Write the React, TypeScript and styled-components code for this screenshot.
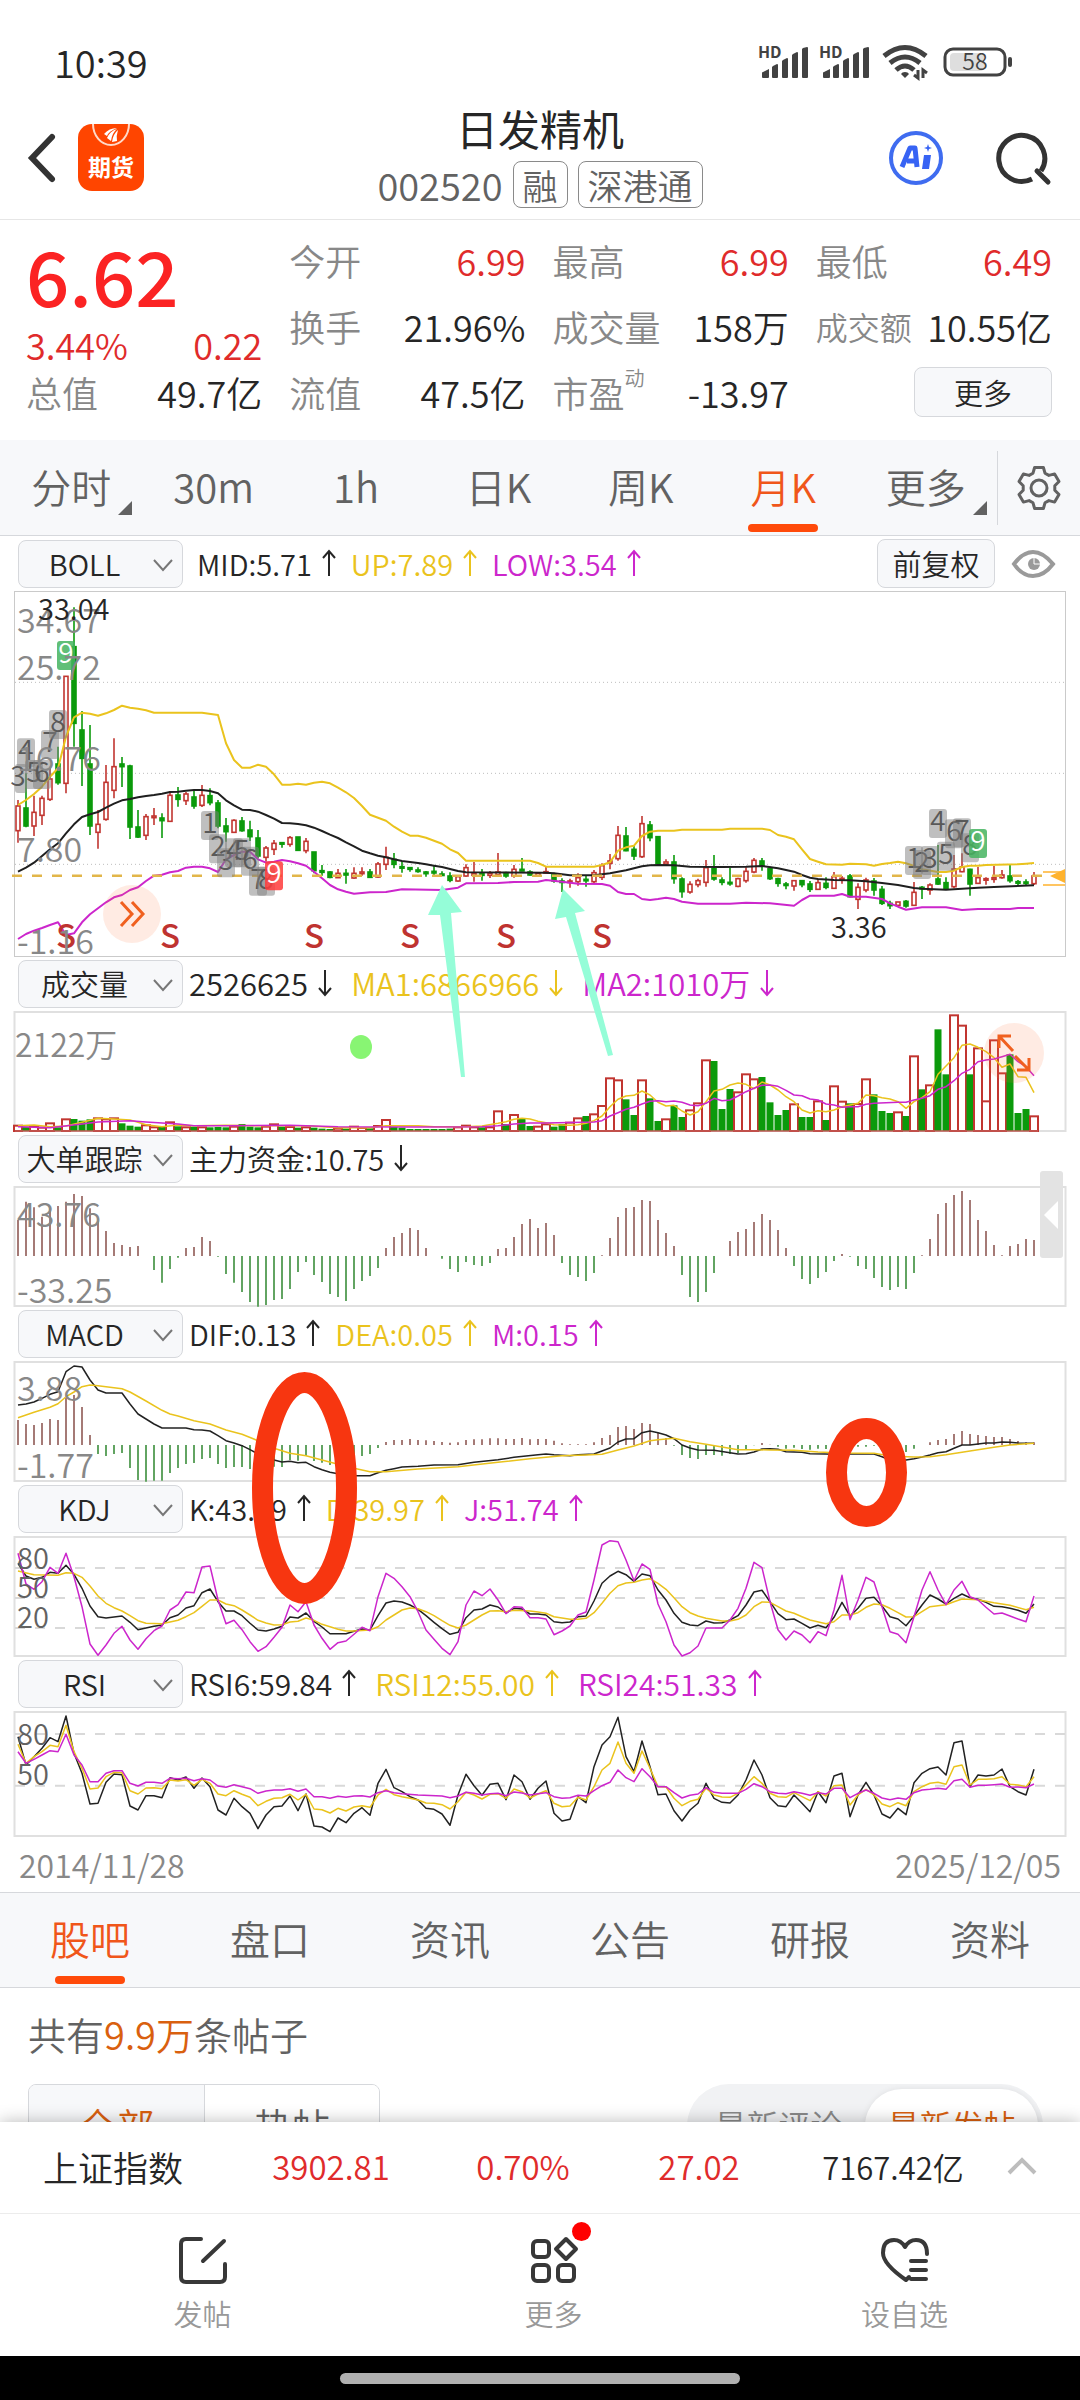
import React from "react";
import styled, { createGlobalStyle, css } from "styled-components";

/* ---------- tokens ---------- */

const ink = "#262626";
const sub = "#626262";
const mute = "#888888";
const rise = "#e02b2b";
const brand = "#ff4a0a";
const gold = "#eac31d";
const violet = "#cc26cc";
const panelBg = "#f7f8fa";
const line = "#d6d8dc";
const up = "#c13530";
const down = "#0b9a0b";

const GlobalStyle = createGlobalStyle`
  * { box-sizing: border-box; }
  body {
    margin: 0;
    background: #fff;
    color: ${ink};
    font-family: "Noto Sans CJK SC", "Noto Sans", sans-serif;
    font-weight: 350;
  }
  button, select {
    margin: 0;
    padding: 0;
    border: 0;
    background: none;
    color: inherit;
    font: inherit;
    cursor: pointer;
  }
  svg { display: block; overflow: visible; }
  svg text { font-family: "Noto Sans CJK SC", "Noto Sans", sans-serif; }
`;

/* ---------- shell ---------- */

const Screen = styled.div`
  display: flex;
  flex-direction: column;
  height: 100vh;
  overflow: hidden;
`;

const Scroll = styled.main`
  flex: 1;
  min-height: 0;
  overflow: hidden;
`;

const StatusBar = styled.div`
  display: flex;
  align-items: center;
  justify-content: space-between;
  height: 96px;
  padding: 28px 67px 0 54px;
  font-size: 38px;
  line-height: 48px;
`;

const StatusIcons = styled.div`
  display: flex;
  align-items: center;
  gap: 12px;
`;

const Header = styled.header`
  display: grid;
  grid-template-columns: 1fr auto 1fr;
  align-items: center;
  height: 124px;
  padding: 0 28px;
  border-bottom: 1px solid #e6e6e6;
`;

const HeaderSide = styled.div<{ $end?: boolean }>`
  display: flex;
  align-items: center;
  gap: ${(p) => (p.$end ? 54 : 23)}px;
  justify-content: ${(p) => (p.$end ? "flex-end" : "flex-start")};
`;

const Titles = styled.div`
  display: flex;
  flex-direction: column;
  align-items: center;
  gap: 3px;
  padding-bottom: 10px;
`;

const StockName = styled.h1`
  margin: 0;
  font-size: 42px;
  font-weight: 400;
  line-height: 60px;
`;

const StockCode = styled.div`
  display: flex;
  align-items: center;
  gap: 10px;
  color: ${sub};
  font-size: 38px;
  line-height: 45px;
`;

const Tag = styled.span`
  padding: 0 9px;
  border: 1px solid #8a8a8a;
  border-radius: 8px;
  font-size: 35px;
`;

/* ---------- quote ---------- */

const Quote = styled.section`
  display: grid;
  grid-template-columns: repeat(4, 1fr);
  column-gap: 27px;
  padding: 7px 28px 15px 26px;
  font-size: 36px;
`;

const QuoteCol = styled.div`
  display: flex;
  flex-direction: column;
`;

const Pair = styled.div<{ $h?: number }>`
  display: flex;
  align-items: center;
  justify-content: space-between;
  height: ${(p) => p.$h ?? 66}px;
  white-space: nowrap;
`;

const LastPrice = styled.strong`
  color: #fb2323;
  font-size: 76px;
  font-weight: 500;
  line-height: 94px;
`;

const Label = styled.span<{ $small?: boolean }>`
  color: ${mute};
  font-size: ${(p) => (p.$small ? 32 : 36)}px;
`;

const Sup = styled.sup`
  font-size: 20px;
  line-height: 20px;
  vertical-align: 22px;
`;

const Val = styled.span<{ $rise?: boolean }>`
  color: ${(p) => (p.$rise ? rise : ink)};
`;

const MoreButton = styled.button`
  width: 138px;
  height: 50px;
  margin-left: auto;
  border: 1px solid ${line};
  border-radius: 8px;
  background: ${panelBg};
  font-size: 29px;
  line-height: 44px;
`;

/* ---------- tabs ---------- */

const TabBar = styled.nav<{ $top?: boolean }>`
  display: flex;
  height: 96px;
  border-bottom: 1px solid ${line};
  ${(p) => p.$top && css`border-top: 1px solid ${line};`}
  background: ${panelBg};
`;

const Tab = styled.button<{ $on?: boolean }>`
  position: relative;
  flex: 1;
  padding-bottom: 4px;
  color: ${(p) => (p.$on ? "#f0561a" : sub)};
  font-size: 40px;
  line-height: 60px;
  ${(p) =>
    p.$on &&
    css`
      &::after {
        content: "";
        position: absolute;
        bottom: 3px;
        left: 50%;
        width: 70px;
        height: 8px;
        margin-left: -35px;
        border-radius: 4px;
        background: ${brand};
      }
    `}
`;

const Corner = styled.i`
  position: absolute;
  right: 10px;
  bottom: 20px;
  border-bottom: 14px solid ${sub};
  border-left: 14px solid transparent;
`;

const GearButton = styled.button`
  display: grid;
  place-items: center;
  width: 83px;
  height: 74px;
  margin-top: 11px;
  border-left: 1px solid ${line};
`;

/* ---------- charts ---------- */

const Charts = styled.section`
  position: relative;
`;

const ChartHead = styled.div<{ $first?: boolean }>`
  display: flex;
  align-items: center;
  height: ${(p) => (p.$first ? 55 : 54)}px;
  padding: 0 25px 0 18px;
  font-size: 30px;
`;

const Picker = styled.label`
  position: relative;
  flex: none;
  margin-right: 6px;
`;

const Select = styled.select`
  appearance: none;
  display: block;
  width: 165px;
  height: 48px;
  padding: 0 34px 2px 2px;
  border: 1px solid ${line};
  border-radius: 8px;
  background: ${panelBg};
  font-size: 29px;
  line-height: 44px;
  text-align: center;
  text-align-last: center;
`;

const PickerArrow = styled.svg`
  position: absolute;
  top: 18px;
  right: 10px;
  pointer-events: none;
`;

const LEGEND_SIZES = {
  compact: { font: 29, gap: 14 },
  regular: { font: 30, gap: 18 },
  wide: { font: 31, gap: 18 },
};

const Legends = styled.div<{ $size: keyof typeof LEGEND_SIZES; $indent?: boolean }>`
  display: flex;
  flex: 1;
  gap: ${(p) => LEGEND_SIZES[p.$size].gap}px;
  padding: 0 0 2px ${(p) => (p.$indent ? 8 : 0)}px;
  font-size: ${(p) => LEGEND_SIZES[p.$size].font}px;
  white-space: nowrap;
`;

const Legend = styled.span<{ $c: string }>`
  display: flex;
  align-items: center;
  gap: 10px;
  color: ${(p) => p.$c};
  line-height: 44px;
`;

const AdjustButton = styled.button`
  width: 118px;
  height: 49px;
  margin-right: 17px;
  padding-bottom: 2px;
  border: 1px solid ${line};
  border-radius: 8px;
  background: ${panelBg};
  font-size: 29px;
  line-height: 44px;
`;

const Panel = styled.div`
  position: relative;
`;

const ChartSvg = styled.svg`
  width: 100%;
  height: auto;
`;

const Round = styled.button<{ $size: number }>`
  position: absolute;
  display: grid;
  place-items: center;
  width: ${(p) => p.$size}px;
  height: ${(p) => p.$size}px;
  border-radius: 50%;
  background: rgba(255, 110, 60, 0.14);
`;

const ForwardButton = styled(Round)`
  left: 103px;
  bottom: 14px;
`;

const ExpandButton = styled(Round)`
  right: 36px;
  top: 12px;
`;

const DrawerHandle = styled.button`
  position: absolute;
  top: -15px;
  right: 17px;
  display: grid;
  place-items: center end;
  width: 23px;
  height: 87px;
  padding-right: 4px;
  border-radius: 3px;
  background: #e3e3e3;
`;

const Marks = styled.svg`
  position: absolute;
  inset: 0;
  width: 100%;
  height: 100%;
  pointer-events: none;
`;

const Dates = styled.div`
  display: flex;
  align-items: center;
  justify-content: space-between;
  height: 55px;
  padding: 0 19px 2px;
  color: ${mute};
  font-size: 32px;
`;

/* ---------- feed ---------- */

const Feed = styled.section`
  padding: 16px 28px 0;
`;

const PostCount = styled.p`
  margin: 0 0 20px;
  color: ${sub};
  font-size: 38px;
  line-height: 60px;
  b { color: #d9600f; font-weight: inherit; }
`;

const Filters = styled.div`
  display: flex;
  justify-content: space-between;
`;

const Segments = styled.div`
  display: flex;
  height: 84px;
  border: 1px solid ${line};
  border-radius: 8px;
  overflow: hidden;
`;

const Segment = styled.button<{ $on?: boolean }>`
  width: 175px;
  padding-bottom: 4px;
  color: ${(p) => (p.$on ? "#d9600f" : sub)};
  background: ${(p) => (p.$on ? panelBg : "#fff")};
  font-size: 38px;
  & + & { border-left: 1px solid ${line}; }
`;

const Pill = styled.div`
  display: flex;
  height: 84px;
  margin-right: 9px;
  padding: 5px;
  border-radius: 42px;
  background: #f1f2f4;
`;

const PillOption = styled.button<{ $on?: boolean }>`
  width: 173px;
  padding-bottom: 4px;
  border-radius: 37px;
  color: ${(p) => (p.$on ? "#d9600f" : mute)};
  background: ${(p) => (p.$on ? "#fff" : "none")};
  box-shadow: ${(p) => (p.$on ? "0 0 6px rgba(0, 0, 0, 0.08)" : "none")};
  font-size: 32px;
`;

/* ---------- bottom ---------- */

const IndexBar = styled.div`
  position: relative;
  display: grid;
  grid-template-columns: 192fr 192fr 192fr 160fr 228fr 30px;
  align-items: center;
  height: 92px;
  padding: 0 43px 3px;
  border-bottom: 1px solid #ececec;
  background: #fff;
  box-shadow: 0 0 16px rgba(0, 0, 0, 0.28);
  font-size: 33px;
  text-align: center;
  white-space: nowrap;
  z-index: 1;
`;

const IndexName = styled.span`
  font-size: 35px;
  text-align: left;
`;

const Turnover = styled.span`
  font-size: 31px;
`;

const BottomNav = styled.nav`
  position: relative;
  z-index: 2;
  display: flex;
  height: 142px;
  padding-left: 27px;
  background: #fff;
`;

const NavItem = styled.button`
  flex: 1;
  display: flex;
  flex-direction: column;
  align-items: center;
  padding-top: 22px;
  color: #999;
  font-size: 29px;
  line-height: 44px;
`;

const NavIcon = styled.span`
  position: relative;
  height: 55px;
  color: #383838;
`;

const Dot = styled.i`
  position: absolute;
  top: -14px;
  right: -13px;
  width: 19px;
  height: 19px;
  border-radius: 50%;
  background: #f00;
`;

const GestureBar = styled.div`
  position: relative;
  z-index: 2;
  display: flex;
  justify-content: center;
  height: 44px;
  padding-top: 17px;
  background: #000;
  &::after {
    content: "";
    width: 400px;
    height: 11px;
    border-radius: 6px;
    background: #b0b0b0;
  }
`;

/* ---------- chart helpers ---------- */

/* Bars sit 8px apart; sample levels are stored in thirds of a pixel. */
const X0 = 18;
const STEP = 8;
const bx = (i: number) => X0 + i * STEP;
const lv = (v: number) => v / 3;

const toPoints = (s: string) =>
  s
    .trim()
    .split(/\s+/)
    .map((p) => {
      const [i, v] = p.split(":").map(Number);
      return `${bx(i)},${lv(v).toFixed(1)}`;
    })
    .join(" ");

const Series = ({ d, c, w = 1.5 }: { d: string; c: string; w?: number }) => (
  <polyline points={toPoints(d)} fill="none" stroke={c} strokeWidth={w} strokeLinejoin="round" />
);

const dense = (s: string) => s.trim().split(/\s+/).map(Number);

const Frame = ({ y, h, c = "#e0e0e0", w = 2 }: { y: number; h: number; c?: string; w?: number }) => (
  <rect x="14.5" y={y + 1} width="1051" height={h - 2} fill="none" stroke={c} strokeWidth={w} />
);

const Grid = ({ v, dash, c = "#d9d9d9", w = 2 }: { v: number; dash: string; c?: string; w?: number }) => (
  <line x1="15" x2="1065" y1={lv(v)} y2={lv(v)} stroke={c} strokeWidth={w} strokeDasharray={dash} />
);

const Axis = ({ v, children, c = mute, s = 34, x = 17 }: { v: number; children: string; c?: string; s?: number; x?: number }) => (
  <text x={x} y={lv(v)} fontSize={s} fontWeight="350" fill={c}>
    {children}
  </text>
);

const Histogram = ({ data, zero }: { data: number[]; zero: number }) => (
  <g strokeWidth="2">
    {data.map((v, i) =>
      v === zero ? null : (
        <line key={i} x1={bx(i)} x2={bx(i)} y1={lv(zero)} y2={lv(v)} stroke={v < zero ? "#a57a76" : "#62a462"} />
      )
    )}
  </g>
);

/* ---------- data ---------- */

/* direction, open/close span, high, low */
const CANDLES = `r678,752,660,788 g684,738,580,742 r697,738,647,768 r655,706,647,735 r597,658,560,663 g552,608,500,614 r289,610,289,640 g200,430,82,500
g450,535,393,618 g552,738,435,765 r733,757,690,806 r607,718,555,722 r560,631,475,655 g552,560,531,621 g558,741,554,777 g741,771,690,774
r710,766,702,780 r708,713,684,735 g714,722,700,774 r646,724,633,726 g645,658,621,680 r642,662,636,675 g651,678,630,686 r646,676,615,681
g647,668,625,676 g669,738,660,745 g738,755,714,785 r721,757,718,758 g723,752,711,755 g750,770,722,783 g774,828,750,835 r804,832,798,845
r790,808,780,825 g788,792,786,803 r773,793,768,800 g771,811,771,811 r784,812,774,820 g816,872,816,880 g872,877,855,887 g876,892,874,895
r880,893,867,894 g880,885,867,911 r880,894,862,896 r876,881,862,887 g876,892,867,894 r852,891,846,893 r832,853,800,870 g838,853,819,865
g860,863,843,878 g863,868,861,875 g870,873,862,878 g876,881,873,890 g874,879,858,886 g882,885,874,887 g888,901,877,907 r890,903,885,905
r863,888,853,890 r880,886,846,905 g880,886,867,902 r880,886,873,894 r876,884,819,888 g878,888,875,893 r868,888,855,893 g868,873,834,874
g876,885,871,887 r880,887,876,889 r875,878,860,882 g882,903,878,908 g903,906,895,936 r903,906,896,923 r893,905,880,917 g898,902,885,920
r878,905,870,911 r857,892,850,900 r843,850,822,868 r766,836,738,842 g768,812,741,814 g808,828,798,840 r731,830,708,834 g735,773,723,784
g770,850,768,853 r846,852,838,856 g846,896,825,911 g897,935,892,953 r913,936,904,941 r902,914,896,922 r863,907,840,920 g866,897,825,902
g900,907,892,916 g907,911,864,917 r896,919,893,922 r874,902,862,908 r841,876,834,880 g843,858,834,872 g866,896,860,900 g896,910,893,920
g912,915,906,928 r902,918,900,932 g902,914,900,922 g912,928,903,936 r908,928,898,930 g910,922,892,928 r890,925,876,927 r895,900,888,911
g888,950,882,952 r922,958,910,987 r900,930,893,937 g903,930,894,947 g928,970,918,975 g970,977,962,987 r966,976,966,977 g964,978,960,983
r937,976,906,978 g922,925,918,957 r915,930,910,944 g897,912,795,915 g908,926,892,928 r867,920,825,925 r861,875,820,877 g868,912,866,947
r893,910,861,912 r896,900,892,914 r893,898,858,908 r885,893,870,896 g888,902,855,908 g905,908,900,917 g906,910,898,917 r888,911,876,915`
  .split(/\s+/)
  .map((c) => ({ rise: c[0] === "r", v: c.slice(1).split(",").map(Number) }));

const BOLL_UP =
  "0:675 1:660 2:642 3:620 4:590 5:565 6:470 7:412 8:398 9:401 10:407 11:400 12:390 13:377 14:383 15:386 16:391 17:398 23:398 25:405 26:490 27:540 28:563 29:563 30:554 31:560 32:583 33:614 34:614 35:611 36:614 37:608 38:605 39:610 40:623 41:637 42:654 43:678 44:704 45:713 46:722 47:740 48:755 49:767 50:767 51:773 52:782 53:791 54:808 55:819 56:842 64:842 65:849 66:860 72:860 73:855 74:847 75:812 76:802 77:797 78:768 79:755 80:752 82:752 83:749 88:749 89:746 93:746 94:750 95:765 96:770 97:778 98:808 99:837 100:845 101:853 103:854 104:851 106:853 107:857 108:852 109:849 110:845 111:850 112:858 113:868 115:876 116:876 117:872 118:861 119:857 120:857 121:855 125:853 126:851 127:849";
const BOLL_MID =
  "0:875 1:863 2:848 3:828 4:808 5:790 6:760 7:733 8:711 9:703 10:696 11:683 12:671 13:661 14:657 15:652 16:648 17:645 18:641 19:636 20:635 21:632 22:630 23:630 24:633 25:640 26:661 27:676 28:689 29:690 30:695 31:705 32:716 33:729 34:730 35:732 36:736 37:743 38:753 39:764 40:774 41:787 42:799 43:812 44:820 45:827 46:832 47:838 48:843 49:846 50:849 51:853 52:857 53:861 54:867 55:873 56:877 66:878 67:880 68:883 69:886 72:886 73:883 74:880 75:875 76:871 77:865 78:859 79:856 80:855 82:856 83:858 84:860 88:861 91:860 93:858 95:865 97:875 98:885 99:893 100:897 102:900 104:901 106:904 108:909 110:915 112:924 113:926 116:929 118:926 120:923 122:921 127:916";
const BOLL_LOW =
  "0:1077 1:1062 2:1052 3:1044 4:1035 5:1027 6:1065 7:1060 8:1027 9:1003 10:985 11:967 12:952 13:945 14:930 15:922 16:903 17:887 18:884 19:877 20:873 21:863 22:860 23:860 24:865 25:876 26:838 27:825 28:815 29:815 30:838 31:848 32:845 33:840 34:844 35:850 36:857 37:875 38:895 39:915 40:928 41:935 42:941 44:937 46:936 48:928 53:930 55:923 56:910 60:909 62:906 65:905 66:900 68:905 70:911 73:912 74:917 75:936 76:942 77:942 78:957 79:960 80:957 81:953 82:957 83:965 85:971 89:971 91:968 94:970 97:977 98:960 99:947 102:947 103:942 104:950 106:950 108:957 109:970 110:980 111:989 113:982 116:982 118:990 120:987 124:987 125:984 127:984";

/* column, top, digit, tone */
const BADGES: [number, number, string, string?][] = [
  [0, 552, "3"], [1, 475, "4"], [2, 540, "5"], [3, 540, "6"], [4, 450, "7"], [5, 390, "8"], [6, 183, "9", "#44b45f"],
  [24, 693, "1"], [25, 763, "2"], [26, 805, "3"], [27, 775, "4"], [28, 775, "5"], [29, 800, "6"], [30, 860, "7"], [31, 860, "8"], [32, 844, "9", "#ff3b3b"],
  [112, 798, "1"], [113, 810, "2"], [114, 798, "3"], [115, 687, "4"], [116, 785, "5"], [117, 718, "6"], [118, 715, "7"], [119, 760, "8"], [120, 747, "9", "#44b45f"],
];

const VOLUME = dense(`497 500 498 503 490 502 478 477 482 478 475 478 475 490 497 500 496 502 501 487 499 502 500 502 502 501 502 500 492 500 502 500
493 500 501 503 502 503 506 507 506 506 500 504 505 498 480 501 503 507 507 507 507 507 506 502 497 502 502 502 454 492 465 476
498 500 493 500 492 488 475 468 463 438 355 361 418 465 361 415 483 478 436 471 451 430 301 303 447 387 397 343 358 351 427 465
450 433 471 471 424 480 379 425 430 432 358 403 453 459 457 468 289 388 376 208 343 166 197 343 265 424 241 340 283 459 447 469`);
const VOL_MA1 =
  "0:497 2:495 4:500 6:498 8:487 10:475 12:477 14:480 15:487 16:494 18:500 20:495 22:497 26:496 30:497 36:497 40:503 44:503 46:497 50:497 52:500 56:500 58:498 60:490 61:485 62:478 63:475 64:477 65:484 66:488 67:494 69:496 70:494 71:490 72:482 73:468 74:440 75:418 76:408 77:406 78:393 79:405 80:427 81:438 82:436 83:453 84:465 85:455 86:425 87:393 88:388 89:375 90:369 91:373 92:386 93:366 94:375 95:390 96:410 97:425 98:450 99:459 100:452 101:455 102:450 103:440 104:435 105:430 106:405 107:407 108:413 109:417 110:425 111:445 112:425 113:413 114:395 115:343 116:318 117:293 118:256 119:252 120:262 121:275 122:293 123:322 124:312 125:350 126:352 127:398";
const VOL_MA2 =
  "0:500 4:503 8:492 10:486 14:482 16:486 20:492 22:497 26:497 34:496 40:500 50:501 58:500 60:497 62:492 64:489 66:489 72:486 73:482 74:468 75:458 76:448 77:442 78:432 79:424 80:422 81:425 82:423 83:427 84:435 85:437 86:430 87:415 88:422 89:420 90:408 91:395 92:385 93:376 94:375 95:379 96:391 97:405 98:407 99:417 100:420 101:432 102:435 103:442 104:440 105:440 106:433 107:430 110:427 111:427 112:420 113:415 114:407 115:388 116:380 117:362 118:340 119:328 120:305 121:300 122:297 123:290 124:283 125:305 126:320 127:347";

const BIG_ORDERS = dense(`780 725 742 770 745 738 725 702 708 745 783 813 849 855 861 858 888 930 968 927 893 864 861 831 843 890 942 968 996 1026 1040 1035
1020 1017 987 936 906 945 966 1002 1011 1023 987 963 948 924 864 831 819 804 810 864 888 896 927 936 906 915 918 909 867 864 831 792
777 804 789 825 909 945 951 963 939 886 834 771 744 741 720 723 780 819 858 945 1011 1026 996 939 888 843 816 807 786 762 780 810
864 918 957 972 954 936 903 882 890 918 927 954 981 990 981 987 939 886 837 762 729 705 693 720 780 813 855 886 858 852 837 840`);

const MACD_BARS = dense(`360 372 375 369 357 360 287 285 321 405 462 468 462 459 504 540 545 542 542 519 504 492 489 477 474 492 504 501 501 507 510 505
500 501 480 482 468 483 488 495 490 485 480 468 462 444 426 420 420 417 420 421 423 426 428 427 420 418 418 415 415 417 417 414
418 417 417 422 430 433 433 433 427 414 405 381 378 387 369 372 399 414 437 465 474 477 465 465 467 462 459 447 436 429 434 440
446 443 447 449 446 447 444 442 438 440 440 437 440 442 450 456 446 435 427 420 417 402 393 402 405 408 411 411 417 423 427 427`);
const DIF =
  "0:315 1:312 2:306 3:295 4:283 5:275 6:215 7:198 8:201 9:240 10:270 11:279 13:279 14:312 15:342 16:357 17:372 18:384 21:384 22:389 23:390 24:393 25:407 26:422 27:429 28:437 29:449 30:462 31:475 32:480 33:486 34:484 35:488 36:487 37:500 38:509 39:517 40:521 42:527 44:527 45:518 46:511 47:506 48:501 50:499 52:495 55:494 57:487 60:479 62:472 65:464 66:462 67:464 69:467 70:464 72:462 73:453 74:444 75:426 76:417 77:416 78:398 79:393 80:398 81:405 82:416 83:435 84:444 85:450 87:451 89:458 90:462 91:461 92:456 93:447 94:446 95:448 96:455 98:457 99:461 101:462 103:464 104:462 107:462 108:470 109:480 111:480 112:476 113:471 114:465 115:458 116:455 117:445 118:435 119:435 120:432 121:429 122:429 123:426 124:427 125:429 127:430";
const DEA =
  "0:353 2:337 4:322 5:311 6:290 7:276 8:260 9:255 10:257 12:263 13:266 14:276 16:303 18:331 19:342 20:348 22:362 24:372 26:390 28:403 30:422 32:445 34:460 36:467 38:480 40:493 42:505 44:515 46:515 50:507 55:500 60:487 64:476 68:467 71:465 73:463 75:450 77:438 79:422 80:419 82:415 84:425 86:433 88:441 90:449 92:449 94:450 97:451 100:456 103:459 107:460 109:468 112:471 114:470 116:464 118:457 120:449 122:442 124:435 127:430";

const KDJ_K =
  "0:790 1:828 2:838 3:832 4:817 5:820 6:796 7:823 8:865 9:918 10:950 11:954 12:951 13:948 14:967 15:989 16:984 17:979 18:975 19:953 20:945 21:924 22:917 23:878 24:867 25:905 26:933 27:933 28:947 29:970 30:990 31:993 32:987 33:979 34:951 35:954 36:939 37:964 38:981 39:1001 41:1001 42:994 43:987 44:990 45:947 46:909 47:903 48:906 49:915 50:928 51:947 52:967 53:986 54:1003 55:997 56:953 57:930 58:927 59:915 60:921 61:939 62:925 63:927 64:942 65:942 66:945 67:965 68:968 69:966 70:950 71:948 72:903 73:850 74:828 75:814 76:824 77:844 78:822 79:827 80:870 81:900 82:940 83:967 84:975 85:977 86:963 87:969 88:968 89:960 90:947 91:915 92:876 93:871 94:905 95:941 96:959 97:957 98:970 99:984 100:976 101:983 102:952 103:907 104:948 105:925 106:895 107:892 108:918 109:950 110:957 111:977 112:948 113:915 114:885 115:897 116:912 117:895 118:882 119:893 120:898 121:907 122:919 123:920 124:925 125:931 126:940 127:912";
const KDJ_D =
  "0:813 2:824 5:826 6:818 7:820 8:832 9:858 10:888 11:910 12:923 13:933 14:947 15:962 16:970 18:971 20:961 21:950 22:938 23:919 24:900 25:900 26:912 27:917 28:930 29:945 30:961 31:969 32:975 33:974 34:966 35:964 36:954 37:961 38:973 39:980 40:988 41:993 42:993 44:990 45:980 46:960 47:945 48:930 49:924 50:926 51:935 52:947 53:962 54:976 55:984 56:975 57:960 58:945 59:933 60:932 61:935 62:931 64:933 65:936 66:940 67:950 69:958 70:958 71:955 72:938 73:910 74:880 75:857 76:849 77:847 78:840 79:836 80:850 81:868 82:893 83:920 84:938 85:948 86:955 88:963 89:963 90:958 91:945 92:920 93:906 94:907 95:920 96:933 97:940 98:950 99:960 101:971 102:965 103:945 104:945 105:938 106:922 107:912 108:914 109:925 110:938 111:951 112:950 113:935 114:920 116:914 117:905 118:897 120:899 122:908 124:916 126:929 127:922";
const KDJ_J =
  "0:760 1:852 2:868 3:845 4:802 5:820 6:760 7:830 8:920 9:1032 10:1066 11:1035 12:1000 13:979 14:1020 15:1048 16:1016 17:992 18:978 19:930 20:914 21:876 22:878 23:801 24:798 25:900 26:971 27:961 28:989 29:1025 30:1054 31:1040 32:1012 33:982 34:915 35:935 36:905 37:975 38:1015 39:1048 40:1028 41:1023 42:1003 43:982 44:992 45:890 46:820 47:835 48:860 49:890 50:935 51:990 52:1018 53:1045 54:1064 55:1025 56:915 57:873 58:887 59:867 60:900 61:941 62:920 63:922 64:953 65:953 66:957 67:1004 68:993 69:978 70:945 71:936 72:840 73:735 74:722 75:725 76:780 77:842 78:792 79:808 80:912 81:965 82:1035 83:1068 84:1058 85:1038 86:984 88:984 89:960 90:925 91:865 92:787 93:803 94:905 95:989 96:1020 97:993 98:1005 99:1028 100:995 101:1007 102:930 103:826 104:959 105:900 106:832 107:846 108:920 109:995 110:1003 111:1028 112:950 113:870 114:815 115:870 116:914 117:870 118:844 119:890 120:900 121:922 122:942 123:939 124:948 125:957 126:965 127:888";

const RSI6 =
  "0:290 1:375 2:350 3:325 4:293 5:305 6:228 7:340 8:400 9:492 10:490 11:427 12:402 13:404 14:498 15:510 16:467 17:467 18:473 19:413 20:420 21:411 22:445 23:414 24:440 25:510 26:525 27:475 28:500 29:520 30:566 31:525 32:500 33:498 34:468 35:512 36:462 37:558 38:561 39:575 40:534 41:548 42:520 43:503 44:526 45:430 46:388 47:443 48:455 49:470 50:480 51:505 52:508 53:522 54:556 55:465 56:403 57:437 58:466 59:433 60:430 61:479 62:405 63:425 64:478 65:445 66:423 67:520 68:543 69:538 70:470 71:488 72:380 73:315 74:290 75:232 76:350 77:395 78:303 79:380 80:464 81:462 82:512 83:543 84:510 85:490 86:430 87:475 88:487 89:489 90:465 91:420 92:360 93:405 94:473 95:497 96:500 97:465 98:490 99:515 100:455 101:488 102:408 103:400 104:530 105:465 106:427 107:465 108:522 109:534 110:505 111:524 112:428 113:400 114:386 115:381 116:405 117:308 118:303 119:440 120:405 121:408 122:405 123:387 124:440 125:455 126:465 127:388";
const RSI12 =
  "0:313 1:370 2:350 3:335 4:316 5:320 6:256 7:335 8:385 9:447 10:444 11:410 12:397 13:398 14:452 15:462 16:444 17:443 18:446 19:420 20:423 21:419 22:436 23:418 24:430 25:462 26:467 27:452 28:463 29:472 30:497 31:484 32:475 33:473 34:463 35:480 36:463 37:507 38:509 39:519 40:505 41:513 42:501 43:497 44:502 45:465 46:448 47:464 48:470 49:475 50:480 51:489 52:490 53:494 54:507 55:485 56:457 57:465 58:477 59:463 60:461 61:475 62:447 63:455 64:474 65:462 66:452 67:490 68:500 69:498 70:472 71:480 72:440 73:390 74:370 75:306 76:370 77:400 78:333 79:385 80:440 81:441 82:475 83:497 84:484 85:478 86:445 87:465 88:471 89:472 90:460 91:435 92:410 93:430 94:460 95:470 96:472 97:458 98:470 99:482 100:455 101:468 102:437 103:435 104:495 105:465 106:448 107:465 108:492 109:500 110:488 111:497 112:455 113:440 114:430 115:427 116:433 117:380 118:375 119:435 120:418 121:418 122:416 123:410 124:433 125:435 126:440 127:410";
const RSI24 =
  "0:335 1:370 2:358 3:345 4:332 5:335 6:283 7:345 8:375 9:425 10:425 11:400 12:392 13:392 14:430 15:438 16:427 17:427 18:430 19:415 20:416 21:415 22:422 23:416 24:420 25:438 26:442 27:434 28:440 29:446 30:460 31:453 32:450 33:450 34:446 35:454 36:447 37:470 38:470 39:475 40:469 41:472 42:468 43:467 44:471 45:458 46:452 47:458 48:461 50:465 53:468 54:473 55:468 56:457 57:460 58:465 59:461 60:460 61:467 62:456 63:459 64:465 65:461 66:458 67:470 68:475 69:473 70:466 71:468 72:452 73:437 74:427 75:390 76:413 77:425 78:386 79:410 80:440 81:440 82:458 83:474 84:466 85:462 86:443 87:457 88:460 90:460 91:448 92:431 93:440 94:455 95:460 96:461 97:455 98:460 99:466 100:458 101:462 102:445 103:445 104:473 105:460 106:450 107:460 108:474 109:479 110:474 111:478 112:458 113:450 114:448 115:445 116:448 117:422 118:418 119:442 120:436 121:436 122:434 123:432 124:442 125:441 126:443 127:432";

/* ---------- icons ---------- */

const Signal = () => (
  <svg width="49" height="34" viewBox="0 0 49 34" fill="#424242">
    <text x="-2" y="13" fontSize="16" fontWeight="700">HD</text>
    <path d="M2 32v-4q0-1 1-1l6-3v8q0 1-1 1H3q-1 0-1-1zM13 21l4-2q1 0 1 1v12q0 1-1 1h-4q-1 0-1-1V22zM23 15l4-2q1 0 1 1v18q0 1-1 1h-4q-1 0-1-1V16zM33 9l4-2q1 0 1 1v24q0 1-1 1h-4q-1 0-1-1V10zM43 3l4-1q1 0 1 1v29q0 1-1 1h-4q-1 0-1-1V4z" />
  </svg>
);

const Wifi = () => (
  <svg width="46" height="36" viewBox="0 0 46 36" fill="none" stroke="#424242" strokeWidth="5">
    <path d="M2 12q21-17 42 0M8 19q15-12 30 0M14 26q9-8 18 0" />
    <path d="M23 28q-3 0-4 2l4 4 4-4q-1-2-4-2z" fill="#424242" stroke="none" />
    <path d="M36 26v8l-4-3M41 34v-8l4 3" strokeWidth="3" />
  </svg>
);

const Battery = () => (
  <svg width="73" height="30" viewBox="-3 0 73 30">
    <rect x="7" y="6" width="34" height="18" rx="4" fill="#dedede" />
    <rect x="2" y="2" width="60" height="26" rx="8" fill="none" stroke="#424242" strokeWidth="3" />
    <rect x="65" y="10" width="4" height="10" rx="2" fill="#424242" />
    <text x="32" y="23" fontSize="23" textAnchor="middle" fill="#424242">58</text>
  </svg>
);

const AppIcon = () => (
  <svg width="66" height="67" viewBox="0 0 66 67">
    <rect width="66" height="67" rx="14" fill="#ff4500" />
    <path d="M15 0a18 21 0 0 0 36 0" fill="none" stroke="#ffd9c8" strokeWidth="2" />
    <path d="M26 10q5-6 13-6-8 3-10 8zM29 14q3-7 10-9-5 4-6 12zM34 18q1-8 6-12-2 6-1 11z" fill="#fff" />
    <text x="33" y="52" fontSize="23" fontWeight="700" fill="#fff" textAnchor="middle">期货</text>
  </svg>
);

const AiIcon = () => (
  <svg width="56" height="56" viewBox="0 0 56 56">
    <circle cx="28" cy="28" r="25" fill="none" stroke="#3f6cf0" strokeWidth="4" />
    <path d="M14 37 L22 18 H27 L29 37 M19 31 H28" fill="none" stroke="#3763f4" strokeWidth="5" strokeLinejoin="round" />
    <path d="M36 25h7l-2 14h-7zM40 14l1 3 3 1-3 1-1 3-1-3-3-1 3-1z" fill="#3763f4" />
  </svg>
);

const SearchIcon = () => (
  <svg width="54" height="56" viewBox="0 0 54 56" fill="none" stroke="#333" strokeWidth="5" strokeLinecap="round">
    <path d="M34 49A23 23 0 1 1 43 41" strokeLinecap="butt" />
    <path d="M39 41 50 52" />
  </svg>
);

const gearPath = Array.from({ length: 6 }, (_, k) => {
  const pt = (deg: number, r: number) => {
    const a = ((k * 60 - 90 + deg) * Math.PI) / 180;
    return `${(24 + r * Math.cos(a)).toFixed(1)} ${(24 + r * Math.sin(a)).toFixed(1)}`;
  };
  return `${k ? "L" : "M"}${pt(-22, 16)}L${pt(-12, 21)}L${pt(12, 21)}L${pt(22, 16)}`;
}).join("") + "Z";

const Gear = () => (
  <svg width="48" height="48" viewBox="0 0 48 48" fill="none" stroke={sub} strokeWidth="3" strokeLinejoin="round">
    <path d={gearPath} />
    <circle cx="24" cy="24" r="8" />
  </svg>
);

const Eye = () => (
  <svg width="43" height="28" viewBox="0 0 43 28" fill="none" stroke="#9a9a9a" strokeWidth="4">
    <path d="M2 14Q11 2 21 2t20 12Q32 26 21 26T2 14z" />
    <circle cx="22" cy="14" r="6" fill="#9a9a9a" stroke="none" />
    <path d="M22 7v7h6" stroke="#fff" strokeWidth="1" />
  </svg>
);

const Arrow = ({ downward }: { downward?: boolean }) => (
  <svg width="15" height="28" viewBox="0 0 15 28" fill="none" stroke="currentColor" strokeWidth="2">
    <path d={downward ? "M7 1v25M1 19l6 7 6-7" : "M7 27V2M1 9l6-7 6 7"} />
  </svg>
);

/* ---------- indicator header ---------- */

type LegendItem = { text: string; c: string; down?: boolean };

type HeadProps = {
  options: string[];
  items: LegendItem[];
  size?: keyof typeof LEGEND_SIZES;
  first?: boolean;
  children?: React.ReactNode;
};

const IndicatorHead = ({ options, items, size = "compact", first, children }: HeadProps) => (
  <ChartHead $first={first}>
    <Picker>
      <Select aria-label="指标" defaultValue={options[0]}>
        {options.map((o) => (
          <option key={o}>{o}</option>
        ))}
      </Select>
      <PickerArrow width="20" height="14" viewBox="0 0 20 14" fill="none" stroke="#777" strokeWidth="2">
        <path d="M1 2l9 10 9-10" />
      </PickerArrow>
    </Picker>
    <Legends $size={size} $indent={first}>
      {items.map((l) => (
        <Legend key={l.text} $c={l.c}>
          {l.text}
          <Arrow downward={l.down} />
        </Legend>
      ))}
    </Legends>
    {children}
  </ChartHead>
);

/* ---------- panels ---------- */

const PriceChart = () => (
  <ChartSvg viewBox="0 11 1080 366">
    <rect x="14.5" y="11.5" width="1051" height="365" fill="none" stroke="#cacaca" />
    {[307, 580, 853].map((v) => (
      <Grid key={v} v={v} dash="1 3" c="#bdbdbd" w={1} />
    ))}
    {CANDLES.map(({ rise: r, v: [a, b, hi, lo] }, i) => {
      const x = bx(i);
      const h = Math.max(lv(b - a), 1.5);
      return (
        <g key={i} stroke={r ? up : down} strokeWidth="1.6">
          <line x1={x} x2={x} y1={lv(hi)} y2={lv(a)} />
          <line x1={x} x2={x} y1={lv(b)} y2={lv(lo)} />
          <rect x={x - 2} y={lv(a)} width="4" height={h} fill={r ? "#fff" : down} />
        </g>
      );
    })}
    <Series d={BOLL_UP} c={gold} w={2} />
    <Series d={BOLL_MID} c="#1f1f1f" w={2} />
    <Series d={BOLL_LOW} c={violet} w={2} />
    <line x1="12" x2="1050" y1="295.7" y2="295.7" stroke="#e2b64a" strokeWidth="2.4" strokeDasharray="10 10" />
    <path d="M1065 289v14l-15-7z" fill="#ffb32e" />
    <path d="M1043 292h22M1043 305h22" stroke="#ffb32e" strokeWidth="1.6" />
    {BADGES.map(([i, top, n, tone]) => (
      <g key={`${i}-${n}`}>
        <rect x={Math.max(bx(i) - 9, 15)} y={lv(top)} width={i === 0 ? 12 : 18} height="29" rx="3" fill={tone ?? "#808080"} opacity={tone ? 0.85 : 0.5} />
        <text x={bx(i)} y={lv(top) + 22} fontSize="28" fontWeight="350" textAnchor="middle" fill={tone ? "#fff" : "#595959"}>
          {n}
        </text>
      </g>
    ))}
    {[6, 19, 37, 49, 61, 73].map((i) => (
      <text key={i} x={bx(i)} y={lv(1105)} fontSize="33" fontWeight="500" textAnchor="middle" fill="#bf3330">
        S
      </text>
    ))}
    <Axis v={158}>34.67</Axis>
    <Axis v={299}>25.72</Axis>
    <Axis v={572}>16.76</Axis>
    <Axis v={845}>7.80</Axis>
    <Axis v={1122}>-1.16</Axis>
    <Axis v={120} x={38} s={29} c={ink}>33.04</Axis>
    <Axis v={1073} x={831} s={29} c={ink}>3.36</Axis>
  </ChartSvg>
);

const VolumeChart = () => (
  <ChartSvg viewBox="0 51 1080 121">
    <Frame y={51} h={121} />
    {VOLUME.map((v, i) => {
      const r = CANDLES[i].rise;
      return r ? (
        <rect key={i} x={bx(i) - 4} y={lv(v)} width="8" height={171 - lv(v)} fill="#fff" stroke={up} strokeWidth="2" />
      ) : (
        <rect key={i} x={bx(i) - 3.5} y={lv(v)} width="7" height={171 - lv(v)} fill={down} />
      );
    })}
    <line x1="15" x2="1038" y1="171" y2="171" stroke="#c05a55" strokeWidth="1.6" />
    <Series d={VOL_MA1} c={gold} />
    <Series d={VOL_MA2} c={violet} />
    <Axis v={290} x={15} s={32}>2122万</Axis>
  </ChartSvg>
);

const BigOrderChart = () => (
  <ChartSvg viewBox="0 226 1080 121">
    <Frame y={226} h={121} />
    <Histogram data={BIG_ORDERS} zero={888} />
    <Axis v={800}>43.76</Axis>
    <Axis v={1029}>-33.25</Axis>
  </ChartSvg>
);

const MacdChart = () => (
  <ChartSvg viewBox="0 61 1080 121">
    <Frame y={61} h={121} />
    <Histogram data={MACD_BARS} zero={435} />
    <Series d={DIF} c="#222" />
    <Series d={DEA} c={gold} />
    <Axis v={303}>3.88</Axis>
    <Axis v={533}>-1.77</Axis>
  </ChartSvg>
);

const KdjChart = () => (
  <ChartSvg viewBox="0 236 1080 121">
    <Frame y={236} h={121} />
    {[804, 894, 984].map((v) => (
      <Grid key={v} v={v} dash="10 10" />
    ))}
    <Series d={KDJ_K} c="#222" />
    <Series d={KDJ_D} c={gold} />
    <Series d={KDJ_J} c={violet} />
    <Axis v={808} s={29} c={sub}>80</Axis>
    <Axis v={893} s={29} c={sub}>50</Axis>
    <Axis v={984} s={29} c={sub}>20</Axis>
  </ChartSvg>
);

const RsiChart = () => (
  <ChartSvg viewBox="0 71 1080 126">
    <Frame y={71} h={126} />
    {[282, 437].map((v) => (
      <Grid key={v} v={v} dash="10 10" />
    ))}
    <Series d={RSI6} c="#222" />
    <Series d={RSI12} c={gold} />
    <Series d={RSI24} c={violet} />
    <Axis v={314} s={29} c={sub}>80</Axis>
    <Axis v={435} s={29} c={sub}>50</Axis>
  </ChartSvg>
);

/* Hand-drawn notes laid over the whole chart stack. */
const Annotations = () => (
  <Marks viewBox="0 536 1080 1301" preserveAspectRatio="none">
    <g fill="#95fdd8">
      <path d="M442 885 462 912 451 913 465 1077 461 1077 440 915 428 915z" />
      <path d="M563 889 585 911 575 913 613 1055 608 1056 566 917 555 919z" />
    </g>
    <ellipse cx="361" cy="1047" rx="11" ry="12" fill="#88f573" />
    <g fill="none" stroke="#f73610" strokeWidth="21">
      <ellipse cx="304.5" cy="1488" rx="42" ry="105.5" />
      <ellipse cx="866.5" cy="1472.5" rx="30" ry="44" />
    </g>
  </Marks>
);

/* ---------- app ---------- */

const COLUMNS: { label: string; value: string; rise?: boolean; small?: boolean; sup?: string }[][] = [
  [
    { label: "今开", value: "6.99", rise: true },
    { label: "换手", value: "21.96%" },
    { label: "流值", value: "47.5亿" },
  ],
  [
    { label: "最高", value: "6.99", rise: true },
    { label: "成交量", value: "158万" },
    { label: "市盈", value: "-13.97", sup: "动" },
  ],
  [
    { label: "最低", value: "6.49", rise: true },
    { label: "成交额", value: "10.55亿", small: true },
  ],
];

export default function App() {
  return (
    <Screen>
      <GlobalStyle />
      <StatusBar>
        <span>10:39</span>
        <StatusIcons>
          <Signal />
          <Signal />
          <Wifi />
          <Battery />
        </StatusIcons>
      </StatusBar>

      <Header>
        <HeaderSide>
          <button aria-label="返回">
            <svg width="27" height="50" viewBox="0 0 27 50" fill="none" stroke="#333" strokeWidth="6" strokeLinecap="round" strokeLinejoin="miter">
              <path d="M24 4 4 25 24 46" />
            </svg>
          </button>
          <AppIcon />
        </HeaderSide>
        <Titles>
          <StockName>日发精机</StockName>
          <StockCode>
            002520<Tag>融</Tag>
            <Tag>深港通</Tag>
          </StockCode>
        </Titles>
        <HeaderSide $end>
          <button aria-label="AI"><AiIcon /></button>
          <button aria-label="搜索"><SearchIcon /></button>
        </HeaderSide>
      </Header>

      <Scroll>
        <Quote>
          <QuoteCol>
            <LastPrice>6.62</LastPrice>
            <Pair $h={46}>
              <Val $rise>3.44%</Val>
              <Val $rise>0.22</Val>
            </Pair>
            <Pair $h={50}>
              <Label>总值</Label>
              <Val>49.7亿</Val>
            </Pair>
          </QuoteCol>
          {COLUMNS.map((col, n) => (
            <QuoteCol key={n}>
              {col.map((c) => (
                <Pair key={c.label}>
                  <Label $small={c.small}>
                    {c.label}
                    {c.sup && <Sup>{c.sup}</Sup>}
                  </Label>
                  <Val $rise={c.rise}>{c.value}</Val>
                </Pair>
              ))}
              {n === 2 && (
                <Pair>
                  <MoreButton>更多</MoreButton>
                </Pair>
              )}
            </QuoteCol>
          ))}
        </Quote>

        <TabBar>
          <Tab>分时<Corner /></Tab>
          <Tab>30m</Tab>
          <Tab>1h</Tab>
          <Tab>日K</Tab>
          <Tab>周K</Tab>
          <Tab $on>月K</Tab>
          <Tab>更多<Corner /></Tab>
          <GearButton aria-label="设置"><Gear /></GearButton>
        </TabBar>

        <Charts>
          <IndicatorHead
            first
            options={["BOLL", "MA"]}
            items={[
              { text: "MID:5.71", c: ink },
              { text: "UP:7.89", c: gold },
              { text: "LOW:3.54", c: violet },
            ]}
          >
            <AdjustButton>前复权</AdjustButton>
            <button aria-label="显示"><Eye /></button>
          </IndicatorHead>
          <Panel>
            <PriceChart />
            <ForwardButton $size={58} aria-label="快进">
              <svg width="28" height="28" viewBox="0 0 28 28" fill="none" stroke="#f0601f" strokeWidth="3">
                <path d="M3 2l11 12L3 26M14 2l11 12-11 12" />
              </svg>
            </ForwardButton>
          </Panel>

          <IndicatorHead
            size="wide"
            options={["成交量"]}
            items={[
              { text: "2526625", c: ink, down: true },
              { text: "MA1:6866966", c: gold, down: true },
              { text: "MA2:1010万", c: violet, down: true },
            ]}
          />
          <Panel>
            <VolumeChart />
            <ExpandButton $size={60} aria-label="全屏">
              <svg width="36" height="38" viewBox="0 0 36 38" fill="none" stroke="#f0601f" strokeWidth="3">
                <path d="M15 2H3v12M3 2l14 15M21 36h12V24M33 36 19 22" />
              </svg>
            </ExpandButton>
          </Panel>

          <IndicatorHead options={["大单跟踪"]} items={[{ text: "主力资金:10.75", c: ink, down: true }]} />
          <Panel>
            <BigOrderChart />
            <DrawerHandle aria-label="展开">
              <svg width="16" height="30" viewBox="0 0 16 30" fill="#fff">
                <path d="M15 1v28L1 15z" />
              </svg>
            </DrawerHandle>
          </Panel>

          <IndicatorHead
            options={["MACD"]}
            items={[
              { text: "DIF:0.13", c: ink },
              { text: "DEA:0.05", c: gold },
              { text: "M:0.15", c: violet },
            ]}
          />
          <MacdChart />

          <IndicatorHead
            options={["KDJ"]}
            items={[
              { text: "K:43.89", c: ink },
              { text: "D:39.97", c: gold },
              { text: "J:51.74", c: violet },
            ]}
          />
          <KdjChart />

          <IndicatorHead
            size="regular"
            options={["RSI"]}
            items={[
              { text: "RSI6:59.84", c: ink },
              { text: "RSI12:55.00", c: gold },
              { text: "RSI24:51.33", c: violet },
            ]}
          />
          <RsiChart />
          <Annotations />
        </Charts>

        <Dates>
          <span>2014/11/28</span>
          <span>2025/12/05</span>
        </Dates>

        <TabBar $top>
          <Tab $on>股吧</Tab>
          <Tab>盘口</Tab>
          <Tab>资讯</Tab>
          <Tab>公告</Tab>
          <Tab>研报</Tab>
          <Tab>资料</Tab>
        </TabBar>

        <Feed>
          <PostCount>
            共有<b>9.9万</b>条帖子
          </PostCount>
          <Filters>
            <Segments>
              <Segment $on>全部</Segment>
              <Segment>热帖</Segment>
            </Segments>
            <Pill>
              <PillOption>最新评论</PillOption>
              <PillOption $on>最新发帖</PillOption>
            </Pill>
          </Filters>
        </Feed>
      </Scroll>

      <IndexBar>
        <IndexName>上证指数</IndexName>
        <Val $rise>3902.81</Val>
        <Val $rise>0.70%</Val>
        <Val $rise>27.02</Val>
        <Turnover>7167.42亿</Turnover>
        <svg width="30" height="18" viewBox="0 0 30 18" fill="none" stroke="#bdbdbd" strokeWidth="4">
          <path d="M2 16 15 3l13 13" />
        </svg>
      </IndexBar>

      <BottomNav>
        <NavItem>
          <NavIcon>
            <svg width="48" height="48" viewBox="0 0 48 48" fill="none" stroke="currentColor" strokeWidth="4" strokeLinecap="round">
              <path d="M22 3H7Q2 3 2 8v33q0 5 5 5h34q5 0 5-5V28M45 5 24 25" />
            </svg>
          </NavIcon>
          发帖
        </NavItem>
        <NavItem>
          <NavIcon>
            <svg width="48" height="48" viewBox="0 0 48 48" fill="none" stroke="currentColor" strokeWidth="4" strokeLinejoin="round">
              <rect x="3" y="5" width="16" height="16" rx="4" />
              <rect x="3" y="29" width="16" height="16" rx="4" />
              <rect x="28" y="29" width="16" height="16" rx="4" />
              <path d="M36 3 46 13 36 23 26 13z" />
            </svg>
            <Dot />
          </NavIcon>
          更多
        </NavItem>
        <NavItem>
          <NavIcon>
            <svg width="48" height="48" viewBox="0 0 48 48" fill="none" stroke="currentColor" strokeWidth="4" strokeLinecap="round" strokeLinejoin="round">
              <path d="M25 44Q2 28 2 17 2 4 13 4q7 0 11 7 4-7 11-7 11 0 11 14M30 25h15M30 34h15M30 43h15M25 44l3-3" />
            </svg>
          </NavIcon>
          设自选
        </NavItem>
      </BottomNav>
      <GestureBar />
    </Screen>
  );
}
